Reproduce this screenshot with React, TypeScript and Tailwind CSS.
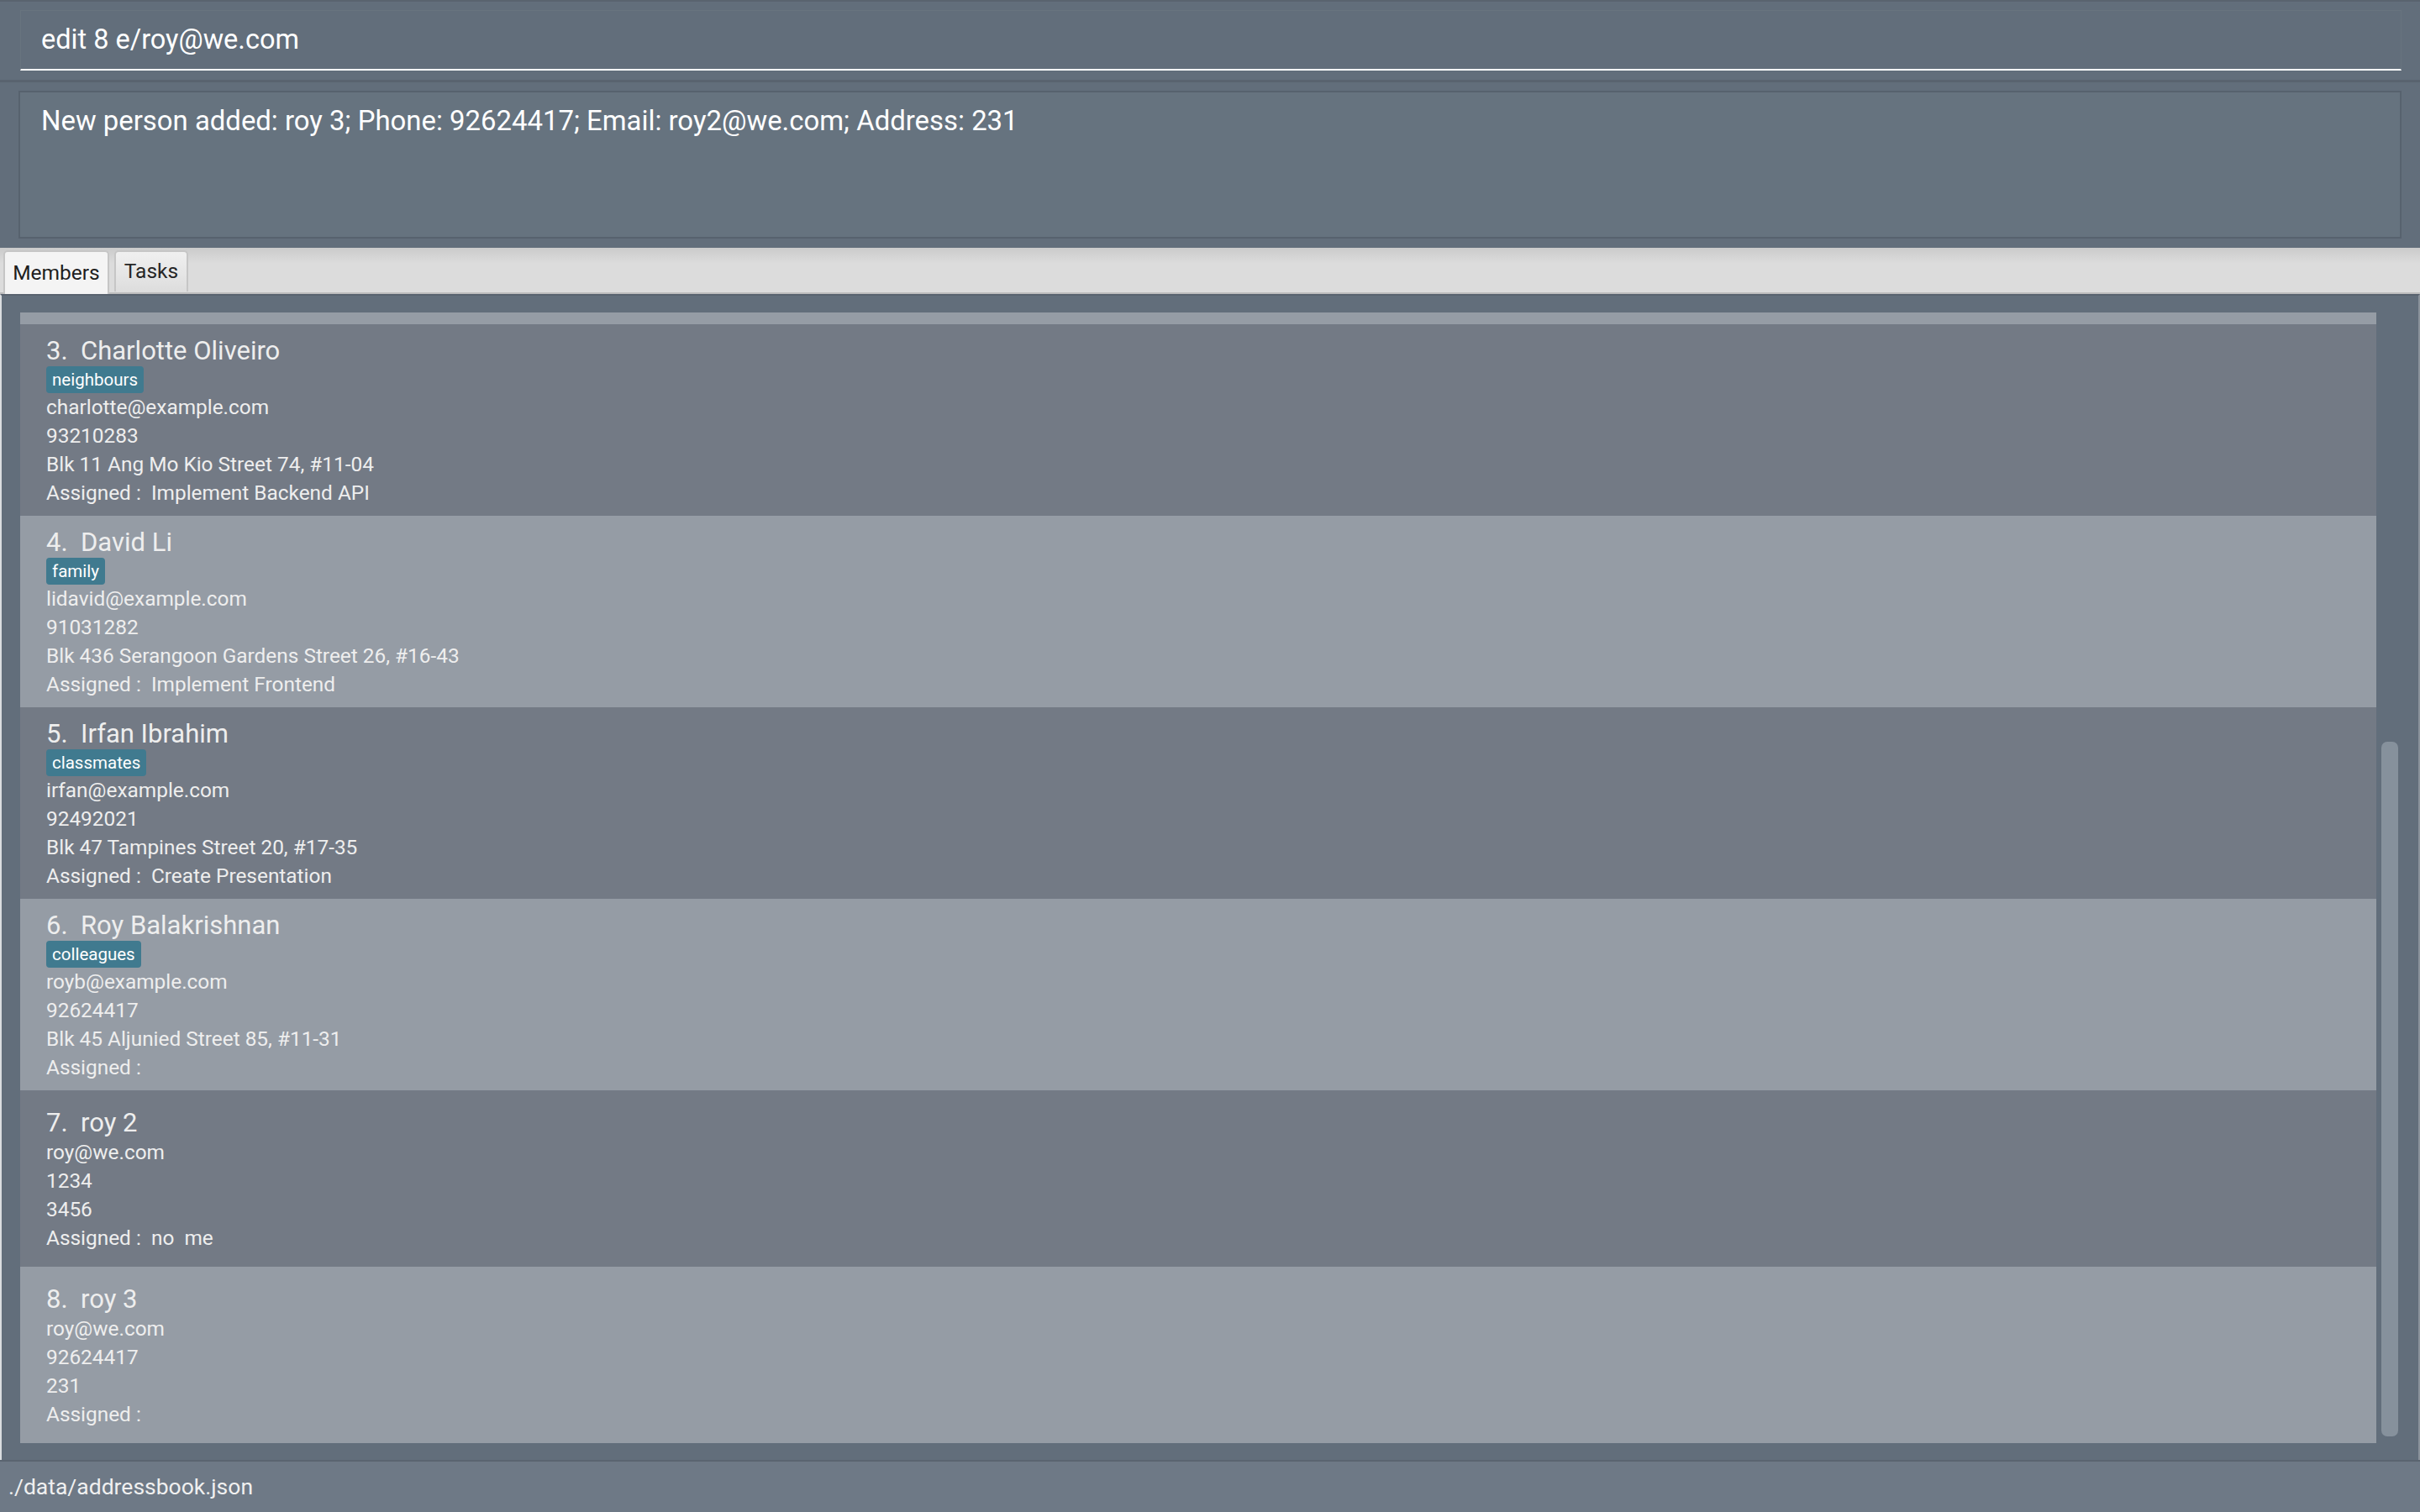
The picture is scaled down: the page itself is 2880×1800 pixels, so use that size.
import React from "react";

type Person = {
  idx: number;
  name: string;
  tags: string[];
  email: string;
  phone: string;
  address: string;
  assigned: string;
  light: boolean;
};

const people: Person[] = [
  {
    idx: 3,
    name: "Charlotte Oliveiro",
    tags: ["neighbours"],
    email: "charlotte@example.com",
    phone: "93210283",
    address: "Blk 11 Ang Mo Kio Street 74, #11-04",
    assigned: "Assigned :  Implement Backend API",
    light: false,
  },
  {
    idx: 4,
    name: "David Li",
    tags: ["family"],
    email: "lidavid@example.com",
    phone: "91031282",
    address: "Blk 436 Serangoon Gardens Street 26, #16-43",
    assigned: "Assigned :  Implement Frontend",
    light: true,
  },
  {
    idx: 5,
    name: "Irfan Ibrahim",
    tags: ["classmates"],
    email: "irfan@example.com",
    phone: "92492021",
    address: "Blk 47 Tampines Street 20, #17-35",
    assigned: "Assigned :  Create Presentation",
    light: false,
  },
  {
    idx: 6,
    name: "Roy Balakrishnan",
    tags: ["colleagues"],
    email: "royb@example.com",
    phone: "92624417",
    address: "Blk 45 Aljunied Street 85, #11-31",
    assigned: "Assigned : ",
    light: true,
  },
  {
    idx: 7,
    name: "roy 2",
    tags: [],
    email: "roy@we.com",
    phone: "1234",
    address: "3456",
    assigned: "Assigned :  no  me",
    light: false,
  },
  {
    idx: 8,
    name: "roy 3",
    tags: [],
    email: "roy@we.com",
    phone: "92624417",
    address: "231",
    assigned: "Assigned : ",
    light: true,
  },
];

function Cell({ p }: { p: Person }) {
  return (
    <div
      className={`${
        p.light ? "bg-[#959CA5]" : "bg-[#737A85]"
      } min-h-[210px] flex flex-col justify-center pl-[31px] pt-[14px] pb-[10px] text-[#EEEEEE]`}
    >
      <div className="text-[31px] leading-[36px] whitespace-pre">
        {`${p.idx}.  ${p.name}`}
      </div>
      {p.tags.length > 0 && (
        <div className="flex gap-[6px]">
          {p.tags.map((t) => (
            <span
              key={t}
              className="h-[32px] px-[7px] rounded-[4px] bg-[#407A8F] text-white text-[20.5px] leading-[32px]"
            >
              {t}
            </span>
          ))}
        </div>
      )}
      <div className="text-[24.4px] leading-[34px]">{p.email}</div>
      <div className="text-[24.4px] leading-[34px]">{p.phone}</div>
      <div className="text-[24.4px] leading-[34px]">{p.address}</div>
      <div className="text-[24.4px] leading-[34px] whitespace-pre">{p.assigned}</div>
    </div>
  );
}

export default function App() {
  return (
    <div className="w-[2880px] h-[1800px] bg-[#626E7B] flex flex-col overflow-hidden font-['Roboto',sans-serif]">
      {/* Command box */}
      <div className="h-[98px] shrink-0 border-t-2 border-b-[3px] border-[#59636F] pl-[24px] pr-[22px] pt-[10px]">
        <div className="h-[72px] border border-[#68747F] border-b-2 border-b-white pl-[24px] flex items-center text-[32.5px] text-white">
          edit 8 e/roy@we.com
        </div>
      </div>

      {/* Result display */}
      <div className="h-[197px] shrink-0 px-[22px] pt-[10px] pb-[11px]">
        <div className="h-[176px] border-2 border-[#57626E] bg-[#66737F] pl-[25px] pt-[14px] text-[32.9px] leading-[40px] text-white">
          New person added: roy 3; Phone: 92624417; Email: roy2@we.com; Address: 231
        </div>
      </div>

      {/* Tab bar */}
      <div className="h-[55px] shrink-0 flex items-start pt-[3px] pl-[4px] border-b-2 border-[#BEBEBE] bg-[linear-gradient(to_bottom,#CBCBCB,#DCDCDC_35%)]">
        <div className="relative z-10 w-[126px] h-[52px] flex items-center justify-center bg-[#F4F4F4] border-2 border-b-0 border-[#C6C6C6] rounded-t-[5px] text-[24.5px] text-[#1E1E1E]">
          Members
        </div>
        <div className="ml-[6px] w-[88px] h-[49px] flex items-center justify-center bg-[linear-gradient(to_bottom,#F0F0F0,#DDDDDD)] border-2 border-b-0 border-[#C6C6C6] rounded-t-[5px] text-[24.5px] text-[#262626]">
          Tasks
        </div>
      </div>

      {/* Person list */}
      <div className="h-[1388px] shrink-0 flex border-t-2 border-[#59636F] border-l-2 border-l-[#DADDE0] border-r-2 border-r-[#8A929B] pt-[20px] pl-[22px]">
        <div className="w-[2804px] h-[1346px] overflow-hidden flex flex-col">
          {/* bottom edge of the previous card, scrolled mostly out of view */}
          <div className="h-[14px] shrink-0 overflow-hidden bg-[#959CA5] pl-[31px] text-[#EEEEEE]">
            <div className="mt-[-30px] text-[24.4px] leading-[34px] whitespace-pre">
              Assigned :  Fix UI Bugs
            </div>
          </div>
          {people.map((p) => (
            <Cell key={p.idx} p={p} />
          ))}
        </div>
        <div className="ml-[6px] w-[20px] h-[1346px] pt-[511px]">
          <div className="h-[827px] rounded-[7px] bg-[#86919C]" />
        </div>
      </div>

      {/* Status bar */}
      <div className="h-[62px] shrink-0 border-t-2 border-[#5A6470] bg-[#6E7986] flex items-center pl-[10px] text-[26.5px] text-[#F0F0F0]">
        ./data/addressbook.json
      </div>
    </div>
  );
}
